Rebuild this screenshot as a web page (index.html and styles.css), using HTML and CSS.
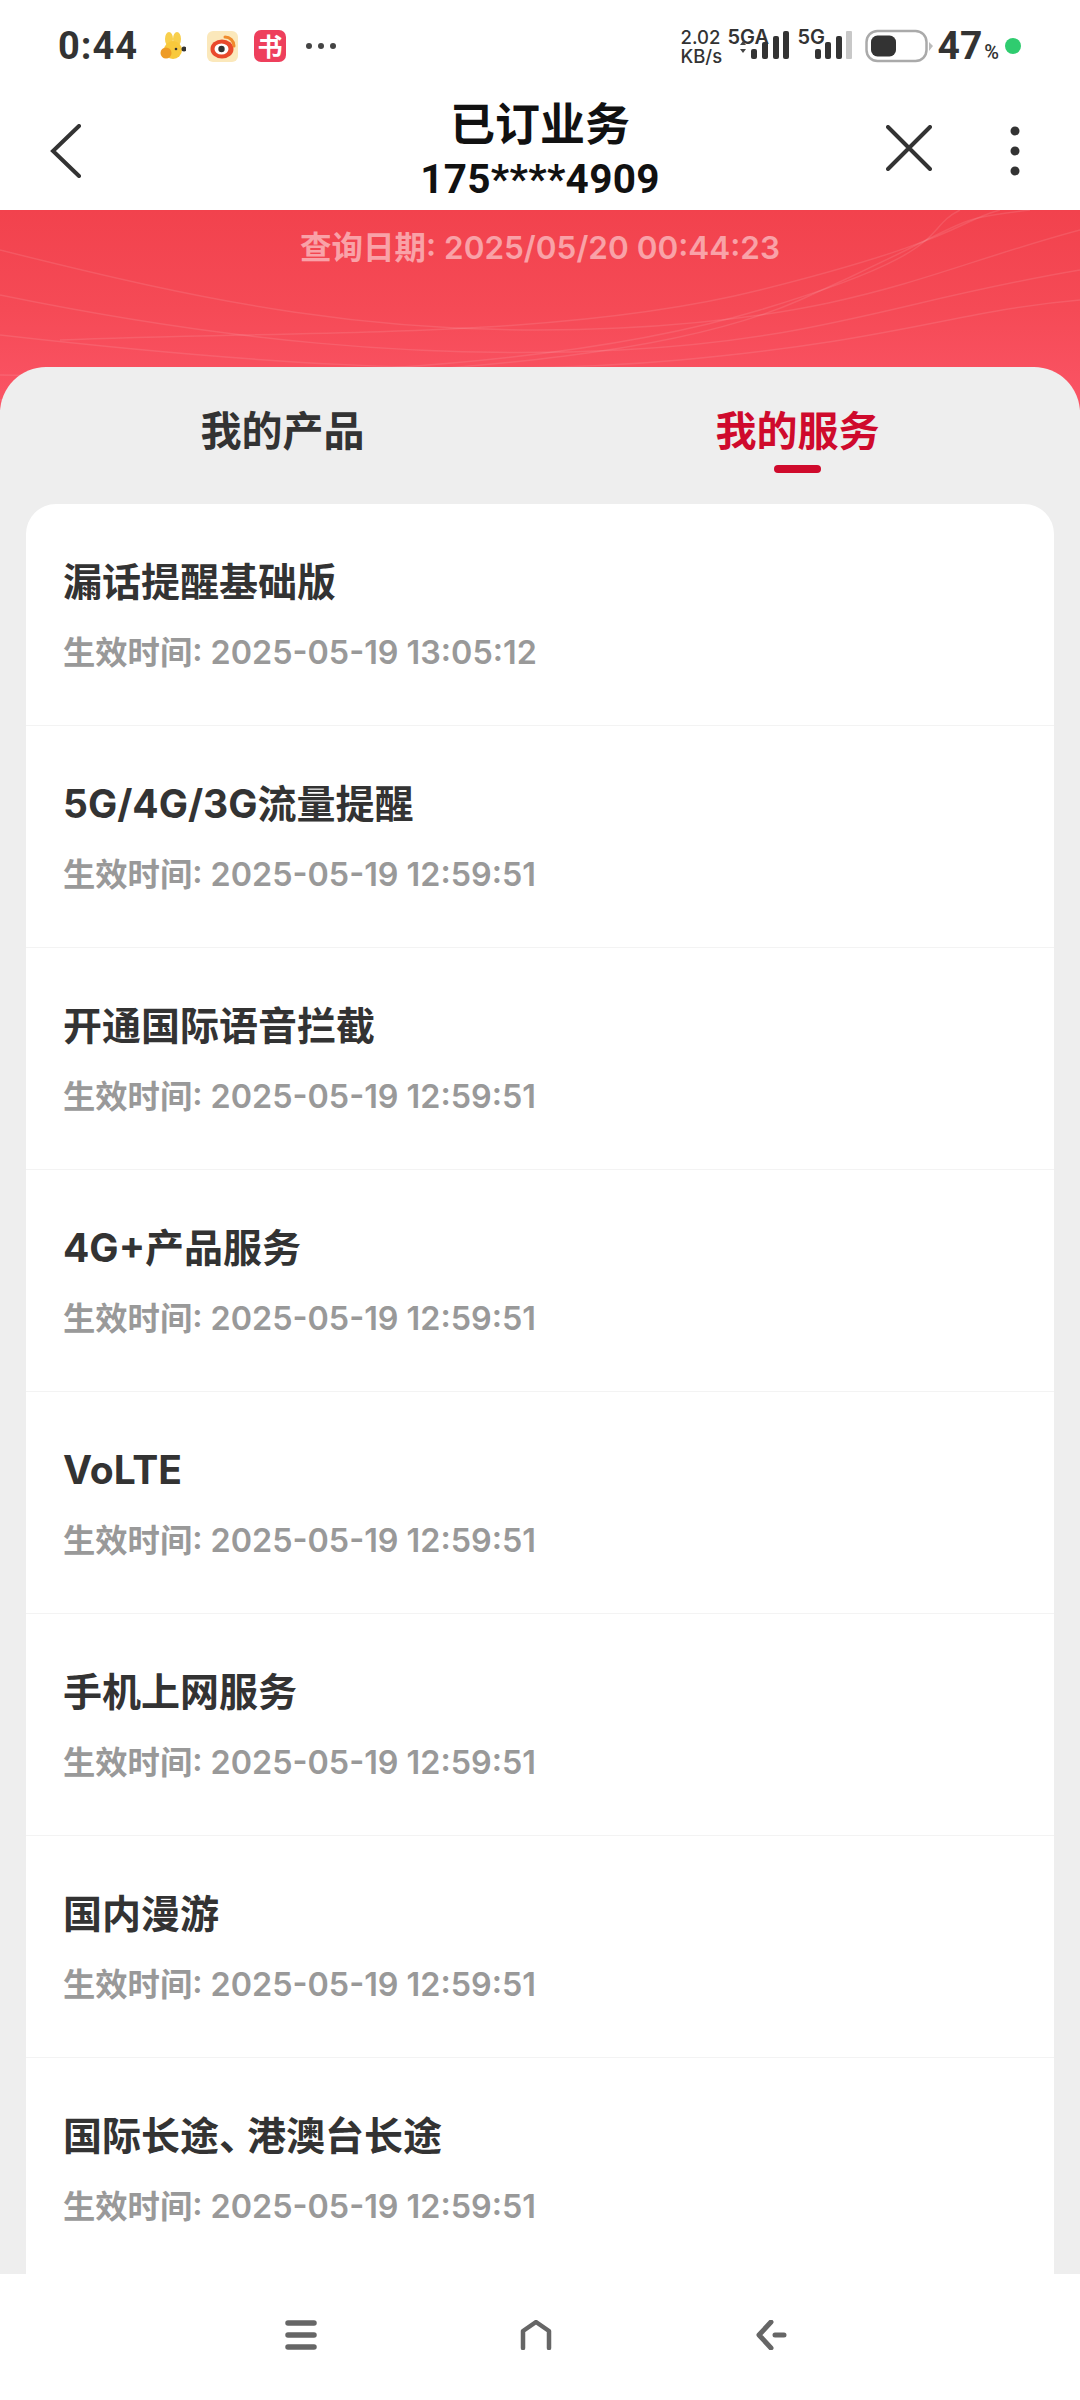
FILE: index.html
```html
<!DOCTYPE html>
<html lang="zh-CN">
<head>
<meta charset="utf-8">
<title>已订业务</title>
<link rel="stylesheet" href="styles.css">
</head>
<body>
<div class="page">
  <header class="top">
    <div class="status">
      <div class="status-left">
        <span class="time">0:44</span>
        <svg class="app app-bunny" viewBox="0 0 26 28" width="26" height="28">
          <ellipse cx="9" cy="7" rx="4" ry="7" fill="#f8cf4c"/>
          <ellipse cx="17" cy="7" rx="4" ry="7" fill="#f8cf4c"/>
          <ellipse cx="13" cy="18" rx="9" ry="9" fill="#f8c93c"/>
          <circle cx="6" cy="21" r="5.5" fill="#ee9b26"/>
          <circle cx="24" cy="17" r="2.5" fill="#333"/>
          <circle cx="16" cy="17" r="1.3" fill="#333"/>
        </svg>
        <svg class="app app-weibo" viewBox="0 0 31 31" width="31" height="31">
          <rect width="31" height="31" rx="6" fill="#fbe8bb"/>
          <ellipse cx="15" cy="18" rx="11.5" ry="9.5" fill="#e9492c"/>
          <path d="M18 6a9 9 0 0 1 9 9" fill="none" stroke="#f08a2c" stroke-width="3" stroke-linecap="round"/>
          <ellipse cx="14.5" cy="18" rx="7" ry="5.5" fill="#fff"/>
          <circle cx="14.5" cy="18" r="3.2" fill="#333"/>
        </svg>
        <span class="app-book">书</span>
        <svg class="more" viewBox="0 0 30 6" width="30" height="6">
          <circle cx="3" cy="3" r="3"/><circle cx="15" cy="3" r="3"/><circle cx="27" cy="3" r="3"/>
        </svg>
      </div>
      <div class="status-right">
        <div class="speed"><span>2.02</span><span>KB/s</span></div>
        <div class="signal signal-a">
          <span class="net">5GA</span>
          <svg viewBox="0 0 51 28" width="51" height="28">
            <path d="M2 14l3-4 3 4zM2 18l3 4 3-4z" fill="#444"/>
            <rect x="13" y="18" width="6" height="10" rx="2" fill="#333"/>
            <rect x="24" y="11" width="6" height="17" rx="2" fill="#333"/>
            <rect x="35" y="5" width="6" height="23" rx="2" fill="#333"/>
            <rect x="45" y="0" width="6" height="28" rx="2" fill="#333"/>
          </svg>
        </div>
        <div class="signal signal-b">
          <span class="net">5G</span>
          <svg viewBox="0 0 37 28" width="37" height="28">
            <rect x="0" y="18" width="6" height="10" rx="2" fill="#333"/>
            <rect x="10" y="11" width="6" height="17" rx="2" fill="#333"/>
            <rect x="21" y="5" width="6" height="23" rx="2" fill="#333"/>
            <rect x="31" y="0" width="6" height="28" rx="1" fill="#c8c8c8"/>
          </svg>
        </div>
        <svg class="battery" viewBox="0 0 68 34" width="68" height="34">
          <rect x="1.5" y="2" width="60" height="30" rx="11" fill="#fff" stroke="#aaa" stroke-width="2.5"/>
          <rect x="6" y="6.5" width="25" height="21" rx="6.5" fill="#333"/>
          <path d="M64 13l4 4-4 5z" fill="#bbb"/>
        </svg>
        <span class="percent">47<small>%</small></span>
        <span class="green-dot"></span>
      </div>
    </div>
    <nav class="nav">
      <svg class="nav-back" viewBox="0 0 32 54" width="32" height="54">
        <path d="M29 2L3 27l26 25" fill="none" stroke="#333" stroke-width="4" stroke-linecap="round"/>
      </svg>
      <div class="nav-title">
        <h1>已订业务</h1>
        <p>175****4909</p>
      </div>
      <div class="nav-actions">
        <svg class="nav-close" viewBox="0 0 46 46" width="46" height="46">
          <path d="M2 2l42 42M44 2L2 44" fill="none" stroke="#333" stroke-width="4" stroke-linecap="round"/>
        </svg>
        <svg viewBox="0 0 10 50" width="10" height="50">
          <circle cx="5" cy="5" r="4.5" fill="#333"/><circle cx="5" cy="25" r="4.5" fill="#333"/><circle cx="5" cy="45" r="4.5" fill="#333"/>
        </svg>
      </div>
    </nav>
  </header>

  <main class="main">
    <section class="banner">
      <svg class="waves" viewBox="0 0 1080 200" preserveAspectRatio="none" aria-hidden="true">
        <g fill="none" stroke="#fff" stroke-opacity=".1" stroke-width="1.5">
          <path d="M0 40C200 90 380 130 620 118S930 60 1080 20"/>
          <path d="M0 85C220 130 420 150 620 140S900 90 1080 60"/>
          <path d="M0 125C220 150 460 170 680 150S960 100 1080 90"/>
          <path d="M60 130C300 120 560 130 760 80S960 10 1000 0"/>
          <path d="M0 165C260 170 560 160 760 100S920 20 960 0"/>
          <path d="M0 190C280 160 620 170 800 90S940 10 1030 0"/>
        </g>
      </svg>
      <p class="query-date">查询日期: 2025/05/20 00:44:23</p>
    </section>

    <section class="panel">
      <div class="tabs">
        <div class="tab"><span>我的产品</span></div>
        <div class="tab tab-active"><span>我的服务</span><i class="tab-bar"></i></div>
      </div>
      <ul class="card">
        <li class="row"><h2>漏话提醒基础版</h2><p>生效时间: 2025-05-19 13:05:12</p></li>
        <li class="row"><h2>5G/4G/3G流量提醒</h2><p>生效时间: 2025-05-19 12:59:51</p></li>
        <li class="row"><h2>开通国际语音拦截</h2><p>生效时间: 2025-05-19 12:59:51</p></li>
        <li class="row"><h2>4G+产品服务</h2><p>生效时间: 2025-05-19 12:59:51</p></li>
        <li class="row"><h2>VoLTE</h2><p>生效时间: 2025-05-19 12:59:51</p></li>
        <li class="row"><h2>手机上网服务</h2><p>生效时间: 2025-05-19 12:59:51</p></li>
        <li class="row"><h2>国内漫游</h2><p>生效时间: 2025-05-19 12:59:51</p></li>
        <li class="row"><h2>国际长途<span class="tight">、</span>港澳台长途</h2><p>生效时间: 2025-05-19 12:59:51</p></li>
      </ul>
    </section>
  </main>

  <footer class="sysnav">
    <svg viewBox="0 0 32 30" width="32" height="30">
      <path d="M3 3h26M3 15h26M3 27h26" fill="none" stroke="#666" stroke-width="5.5" stroke-linecap="round"/>
    </svg>
    <svg viewBox="0 0 32 30" width="32" height="30">
      <path d="M3 28V11L16 2l13 9v17" fill="none" stroke="#666" stroke-width="4.5" stroke-linecap="round" stroke-linejoin="round"/>
    </svg>
    <svg viewBox="0 0 32 30" width="32" height="30">
      <path d="M16 2L4 15l12 13M20 15h9" fill="none" stroke="#666" stroke-width="5" stroke-linecap="round" stroke-linejoin="round"/>
    </svg>
  </footer>
</div>
</body>
</html>
```

FILE: styles.css
```css
* { box-sizing: border-box; margin: 0; padding: 0; }
html, body { background: #fff; }
body { font-family: "Noto Sans CJK SC", "Noto Sans", sans-serif; }

.page { width: 1080px; height: 2400px; display: flex; flex-direction: column; overflow: hidden; }

.top { background: #fff; height: 210px; flex: none; }

.status { height: 92px; display: flex; justify-content: space-between; align-items: center; padding: 0 59px 0 58px; }
.status-left, .status-right { display: flex; align-items: center; }
.time { font-family: "Roboto", sans-serif; font-weight: 700; font-size: 38px; color: #333; width: 102px; letter-spacing: 1px; }
.app-weibo { margin-left: 21px; }
.app-book { width: 32px; height: 32px; margin-left: 16px; border-radius: 7px; background: #ee3f5c; color: #fff; font-size: 25px; font-weight: 700; line-height: 31px; text-align: center; }
.more { margin-left: 20px; fill: #444; }

.speed { display: flex; flex-direction: column; font-family: "Inter", sans-serif; font-weight: 500; font-size: 18.5px; line-height: 19px; color: #333; width: 47px; margin-top: 2px; }
.signal { flex: none; display: flex; height: 32px; margin-top: -6px; }
.signal svg { align-self: flex-end; flex: none; }
.net { font-family: "Inter", sans-serif; font-weight: 600; font-size: 20px; line-height: 20px; color: #333; }
.signal-a .net { width: 38px; margin-right: -28px; }
.signal-b { margin-left: 9px; }
.signal-b .net { width: 25px; margin-right: -8px; }
.battery { flex: none; margin-left: 13px; }
.percent { font-family: "Roboto", sans-serif; font-weight: 700; font-size: 39px; color: #333; margin-left: 5px; }
.percent small { font-size: 20px; font-weight: 500; margin-left: 2px; }
.green-dot { width: 16px; height: 16px; border-radius: 50%; background: #2fcc6f; margin-left: 6px; }

.nav { height: 118px; display: grid; grid-template-columns: 1fr auto 1fr; align-items: center; padding: 0 60px; }
.nav-back { margin-left: -10px; }
.nav-title { text-align: center; color: #111; }
.nav-title h1 { font-size: 45px; line-height: 56px; font-weight: 700; margin-top: -1px; }
.nav-title p { font-size: 40.5px; line-height: 56px; font-weight: 700; font-family: "Roboto", "Noto Sans CJK SC", sans-serif; letter-spacing: .3px; margin-top: 1px; }
.nav-actions { display: flex; align-items: center; justify-content: flex-end; gap: 78px; }
.nav-close { margin-top: -6px; }

.main { flex: 1; min-height: 0; overflow: hidden; background: #eee; }

.banner { height: 200px; position: relative; background: linear-gradient(180deg, #f2424d 0%, #f54a56 50%, #fb5566 100%); }
.waves { position: absolute; inset: 0; width: 100%; height: 100%; }
.query-date { position: relative; text-align: center; font-size: 31.5px; line-height: 44px; padding-top: 16px; font-weight: 600; color: rgba(255,255,255,.5); font-family: "Inter", "Noto Sans CJK SC", sans-serif; }

.panel { margin-top: -43px; position: relative; background: #eee; border-radius: 46px 46px 0 0; }

.tabs { display: grid; grid-template-columns: 1fr 1fr; padding: 33px 25px 0; height: 137px; }
.tab { display: flex; flex-direction: column; align-items: center; font-size: 41px; line-height: 56px; font-weight: 700; color: #333; }
.tab-active { color: #cf0a2c; }
.tab-bar { width: 47px; height: 8px; margin-top: 9px; border-radius: 4px; background: #cf0a2c; }

.card { list-style: none; margin: 0 26px; background: #fff; border-radius: 30px 30px 0 0; }
.row { height: 222px; padding: 50px 0 0 37px; border-bottom: 1px solid #f3f3f3; }
.row h2 { font-size: 39px; line-height: 56px; font-weight: 700; color: #333; font-family: "Inter", "Noto Sans CJK SC", sans-serif; }
.row p { font-size: 32.3px; line-height: 44px; margin-top: 21px; font-weight: 600; color: #999; font-family: "Inter", "Noto Sans CJK SC", sans-serif; }
.tight { letter-spacing: -11px; }

.sysnav { flex: none; height: 126px; background: #fff; display: flex; justify-content: center; align-items: flex-start; gap: 203px; padding: 46px 8px 0 0; }
```
